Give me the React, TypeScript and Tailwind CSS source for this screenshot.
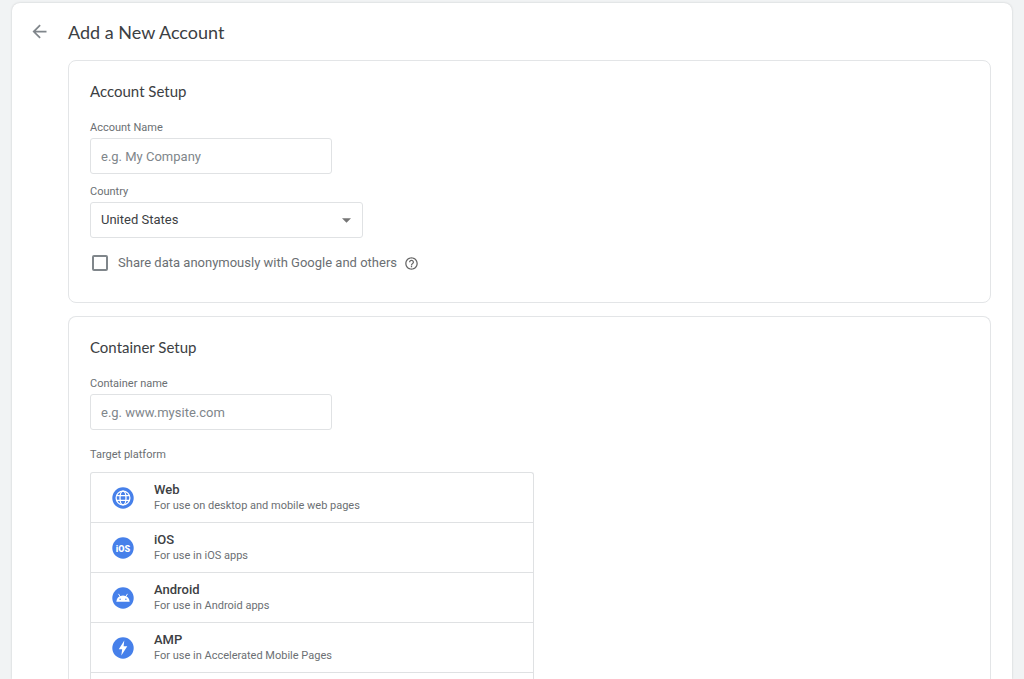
import type { ReactNode } from "react";

function BackArrow() {
  return (
    <svg viewBox="0 0 24 24" className="size-[21px] fill-[#80868b]" aria-hidden="true">
      <path d="M20 11H7.83l5.59-5.59L12 4l-8 8 8 8 1.41-1.41L7.83 13H20v-2z" />
    </svg>
  );
}

function HelpIcon() {
  return (
    <svg viewBox="0 0 24 24" className="size-[15px] fill-[#666]" aria-hidden="true">
      <path d="M11 18h2v-2h-2v2zm1-16C6.480 2 2 6.480 2 12s4.480 10 10 10 10-4.480 10-10S17.520 2 12 2zm0 18c-4.410 0-8-3.590-8-8s3.590-8 8-8 8 3.590 8 8-3.590 8-8 8zm0-14c-2.210 0-4 1.790-4 4h2c0-1.100.9-2 2-2s2 .9 2 2c0 2-3 1.750-3 5h2c0-2.250 3-2.500 3-5 0-2.210-1.790-4-4-4z" />
    </svg>
  );
}

function Disc({ children }: { children: ReactNode }) {
  return (
    <svg viewBox="0 0 22 22" className="size-[22px] shrink-0" aria-hidden="true">
      <circle cx="11" cy="11" r="10.700" fill="#4680ea" />
      {children}
    </svg>
  );
}

const platforms = [
  {
    name: "Web",
    note: "For use on desktop and mobile web pages",
    icon: (
      <Disc>
        <g fill="none" stroke="#fff" strokeWidth="1.300">
          <circle cx="11" cy="11" r="6.900" />
          <ellipse cx="11" cy="11" rx="3" ry="6.900" />
          <path d="M4.600 8.700h12.800M4.600 13.300h12.800" />
        </g>
      </Disc>
    ),
  },
  {
    name: "iOS",
    note: "For use in iOS apps",
    icon: (
      <Disc>
        <text x="11" y="14.500" textAnchor="middle" fill="#fff" className="font-['Roboto'] text-[9px] font-black">
          iOS
        </text>
      </Disc>
    ),
  },
  {
    name: "Android",
    note: "For use in Android apps",
    icon: (
      <Disc>
        <path d="M4.300 14.800a6.700 6.300 0 0 1 13.400 0z" fill="#fff" />
        <path d="M6.700 7.200l1.500 2.400M15.300 7.200l-1.500 2.400" stroke="#fff" strokeWidth="0.900" strokeLinecap="round" />
        <circle cx="8.100" cy="12.200" r="0.700" fill="#4680ea" />
        <circle cx="13.900" cy="12.200" r="0.700" fill="#4680ea" />
      </Disc>
    ),
  },
  {
    name: "AMP",
    note: "For use in Accelerated Mobile Pages",
    icon: (
      <Disc>
        <path d="M12.300 3.500L6.800 12.300h3.400L9.300 18.500l6-9.200h-3.700z" fill="#fff" />
      </Disc>
    ),
  },
];

const fieldLabel = "block text-[11px] leading-4 text-[#6b6f73]";
const field =
  "block h-9 w-full rounded-[3px] border border-[#e0e2e4] bg-white px-[10px] text-[13px] outline-none focus:border-[#4680ea]";

function TextField({ id, label, placeholder }: { id: string; label: string; placeholder: string }) {
  return (
    <div className="w-[242px]">
      <label htmlFor={id} className={fieldLabel}>
        {label}
      </label>
      <input
        id={id}
        type="text"
        placeholder={placeholder}
        className={`${field} mt-[2px] text-[#3c4043] placeholder:text-[#80868b]`}
      />
    </div>
  );
}

export default function App() {
  return (
    <div className="flex h-screen overflow-hidden bg-[#f1f3f4] px-3 pt-[3px] font-['Roboto',sans-serif]">
      <main className="flex flex-1 flex-col rounded-t-lg bg-white pr-[21px] shadow-[0_0_2px_rgba(60,64,67,0.25)]">
        <header className="flex h-[57px] shrink-0 items-center">
          <div className="flex w-14 pl-[17px]">
            <button type="button" aria-label="Back" className="rounded-full">
              <BackArrow />
            </button>
          </div>
          <h1 className="font-['Lato',sans-serif] text-lg leading-6 text-[#3c4043]">Add a New Account</h1>
        </header>

        <div className="ml-14 flex flex-1 flex-col gap-[13px]">
          <section className="h-[243px] shrink-0 rounded-lg border border-[#e3e5e7] px-[21px] pt-5">
            <h2 className="font-['Lato',sans-serif] text-[15px] leading-5 text-[#3c4043]">Account Setup</h2>
            <div className="mt-[19px] flex flex-col gap-[10px]">
              <TextField id="account-name" label="Account Name" placeholder="e.g. My Company" />
              <div className="w-[273px]">
                <label htmlFor="country" className={fieldLabel}>
                  Country
                </label>
                <div className="relative mt-[2px]">
                  <select id="country" className={`${field} appearance-none text-[#3c4043]`}>
                    <option>United States</option>
                  </select>
                  <svg
                    viewBox="0 0 10 5"
                    className="pointer-events-none absolute top-4 right-3 h-[5px] w-[9px] fill-[#757575]"
                    aria-hidden="true"
                  >
                    <path d="M0 0h10L5 5z" />
                  </svg>
                </div>
              </div>
            </div>
            <div className="mt-4 ml-[2px] flex items-center">
              <input
                id="share"
                type="checkbox"
                className="size-4 appearance-none rounded-[2px] border-2 border-[#80868b] checked:bg-[#4680ea]"
              />
              <label htmlFor="share" className="ml-[10px] text-[13px] leading-[18px] text-[#6b6f73]">
                Share data anonymously with Google and others
              </label>
              <button type="button" aria-label="Help" className="ml-[7px]">
                <HelpIcon />
              </button>
            </div>
          </section>

          <section className="flex flex-1 flex-col rounded-t-lg border border-b-0 border-[#e3e5e7] px-[21px] pt-5">
            <h2 className="font-['Lato',sans-serif] text-[15px] leading-5 text-[#3c4043]">Container Setup</h2>
            <div className="mt-[19px]">
              <TextField id="container-name" label="Container name" placeholder="e.g. www.mysite.com" />
            </div>
            <h3 id="platform" className="mt-[17px] text-[11px] leading-4 text-[#6b6f73]">
              Target platform
            </h3>
            <div
              role="group"
              aria-labelledby="platform"
              className="mt-[9px] flex w-full max-w-[444px] flex-1 flex-col rounded-t-[3px] border border-b-0 border-[#dfe1e3]"
            >
              {platforms.map(({ name, note, icon }) => (
                <button
                  key={name}
                  type="button"
                  className="flex h-[50px] shrink-0 items-center border-b border-[#dfe1e3] pl-[21px] text-left"
                >
                  {icon}
                  <span className="ml-5 flex flex-col">
                    <span className="text-[13px] leading-4 font-medium text-[#3c4043]">{name}</span>
                    <span className="text-[11px] leading-4 text-[#6b6f73]">{note}</span>
                  </span>
                </button>
              ))}
            </div>
          </section>
        </div>
      </main>
    </div>
  );
}
